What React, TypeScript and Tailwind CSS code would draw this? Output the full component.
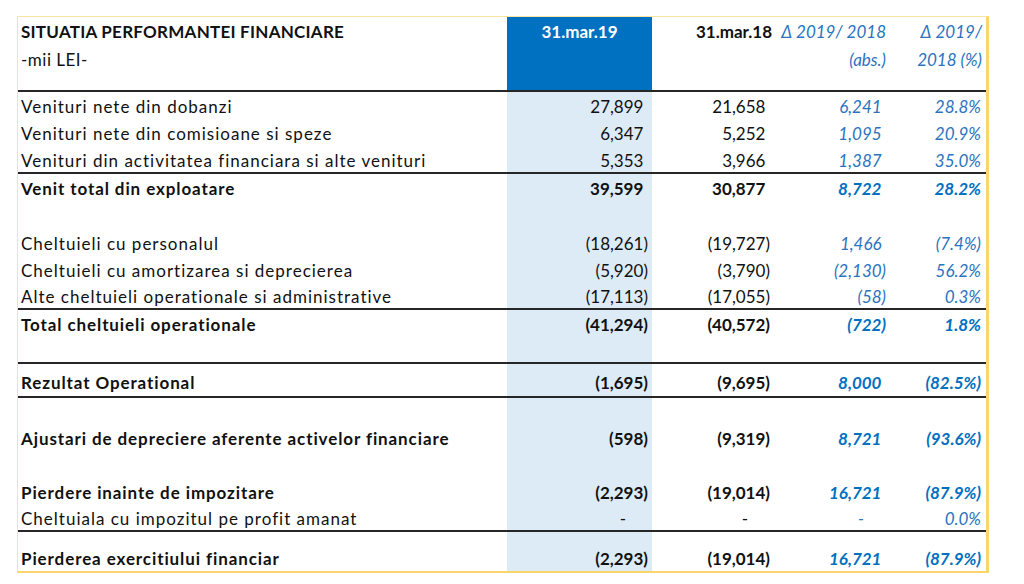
type Row = {
  label: string;
  vals?: [string, string, string, string];
  bold?: boolean;
  h: string;
  line?: boolean;
  pb?: string;
};

const rows: Row[] = [
  { label: "Venituri nete din dobanzi", vals: ["27,899", "21,658", "6,241", "28.8%"], h: "h-[27px]" },
  { label: "Venituri nete din comisioane si speze", vals: ["6,347", "5,252", "1,095", "20.9%"], h: "h-[27px]" },
  { label: "Venituri din activitatea financiara si alte venituri", vals: ["5,353", "3,966", "1,387", "35.0%"], h: "h-[28px]", line: true },
  { label: "Venit total din exploatare", vals: ["39,599", "30,877", "8,722", "28.2%"], bold: true, h: "h-[27px]" },
  { label: "", h: "h-[27px]" },
  { label: "Cheltuieli cu personalul", vals: ["(18,261)", "(19,727)", "1,466", "(7.4%)"], h: "h-[28px]" },
  { label: "Cheltuieli cu amortizarea si deprecierea", vals: ["(5,920)", "(3,790)", "(2,130)", "56.2%"], h: "h-[27px]" },
  { label: "Alte cheltuieli operationale si administrative", vals: ["(17,113)", "(17,055)", "(58)", "0.3%"], h: "h-[27px]", line: true },
  { label: "Total cheltuieli operationale", vals: ["(41,294)", "(40,572)", "(722)", "1.8%"], bold: true, h: "h-[27px]" },
  { label: "", h: "h-[27px]", line: true },
  { label: "Rezultat Operational", vals: ["(1,695)", "(9,695)", "8,000", "(82.5%)"], bold: true, h: "h-[34px]", line: true, pb: "pb-[3px]" },
  { label: "", h: "h-[26px]" },
  { label: "Ajustari de depreciere aferente activelor financiare", vals: ["(598)", "(9,319)", "8,721", "(93.6%)"], bold: true, h: "h-[27px]" },
  { label: "", h: "h-[27px]" },
  { label: "Pierdere inainte de impozitare", vals: ["(2,293)", "(19,014)", "16,721", "(87.9%)"], bold: true, h: "h-[27px]" },
  { label: "Cheltuiala cu impozitul pe profit amanat", vals: ["-", "-", "-", "0.0%"], h: "h-[27px]", line: true },
  { label: "Pierderea exercitiului financiar", vals: ["(2,293)", "(19,014)", "16,721", "(87.9%)"], bold: true, h: "h-[39px]" },
];

const grid = "grid grid-cols-[489px_145px_123px_115px_96px]";

// accounting style: positives leave room for the closing paren, dashes sit inward
function Acc({ v }: { v: string }) {
  if (v === "-") return <span className="pr-[22px]">-</span>;
  if (v.startsWith("(")) return <span>{v}</span>;
  return (
    <span>
      {v}
      <span className="invisible">)</span>
    </span>
  );
}

function DataRow({ r }: { r: Row }) {
  const weight = r.bold ? "font-bold" : "font-normal";
  const blue = r.bold ? "text-[#0070c0]" : "text-[#2a73bf]";
  const pb = r.pb ?? (r.line ? "pb-[1px]" : "pb-[2px]");
  return (
    <div
      className={`${grid} ${r.h} box-border ${r.line ? "border-b-2 border-[#262626]" : ""} leading-[20px] text-[17px]`}
    >
      <div
        className={`flex items-end ${pb} pl-[3px] text-[#111] ${weight} ${r.bold ? "tracking-[0.9px]" : "tracking-[1px]"} whitespace-nowrap`}
      >
        {r.label}
      </div>
      <div className={`flex items-end justify-end ${pb} pr-[4px] bg-[#ddebf7] text-[#111] ${weight}`}>
        {r.vals && <Acc v={r.vals[0]} />}
      </div>
      <div className={`flex items-end justify-end ${pb} pr-[5px] text-[#111] ${weight}`}>
        {r.vals && <Acc v={r.vals[1]} />}
      </div>
      <div className={`flex items-end justify-end ${pb} pr-[4px] italic ${blue} ${weight}`}>
        {r.vals && <Acc v={r.vals[2]} />}
      </div>
      <div className={`flex items-end justify-end ${pb} pr-[5px] italic ${blue} ${weight}`}>
        {r.vals && r.vals[3]}
      </div>
    </div>
  );
}

export default function App() {
  return (
    <div className="w-[1024px] h-[584px] bg-white pt-[16px] pl-[17px] font-['Lato',sans-serif]">
      <div className="w-[972px] border-l border-t border-[#fbe3a0] border-r-[3px] border-r-[#f9d66c] border-b-2 border-b-[#f9d66c]">
        {/* header */}
        <div className={`${grid} h-[27px] leading-[20px] text-[17px]`}>
          <div className="flex items-end pb-[2px] pl-[3px] font-bold tracking-[0.25px] text-[#111]">
            SITUATIA PERFORMANTEI FINANCIARE
          </div>
          <div className="flex items-end justify-center pb-[2px] bg-[#0070c0] text-white font-bold">
            31.mar.19
          </div>
          <div className="flex items-end justify-end pb-[2px] pr-[3px] font-bold text-[#111]">
            31.mar.18
          </div>
          <div className="flex items-end justify-end pb-[2px] pr-[4px] italic text-[#2a73bf]">
            Δ 2019/ 2018
          </div>
          <div className="flex items-end justify-end pb-[2px] pr-[4px] italic text-[#2a73bf]">
            Δ 2019/
          </div>
        </div>
        <div className={`${grid} h-[28px] leading-[20px] text-[17px]`}>
          <div className="flex items-end pb-[2px] pl-[3px] tracking-[0.5px] text-[#111]">-mii LEI-</div>
          <div className="bg-[#0070c0]" />
          <div />
          <div className="flex items-end justify-end pb-[2px] pr-[4px] italic text-[#2a73bf]">
            (abs.)
          </div>
          <div className="flex items-end justify-end pb-[2px] pr-[4px] italic text-[#2a73bf]">
            2018 (%)
          </div>
        </div>
        <div className={`${grid} h-[20px] box-border border-b-2 border-[#262626]`}>
          <div />
          <div className="bg-[#0070c0]" />
          <div />
          <div />
          <div />
        </div>

        {rows.map((r, i) => (
          <DataRow key={i} r={r} />
        ))}
      </div>
    </div>
  );
}
